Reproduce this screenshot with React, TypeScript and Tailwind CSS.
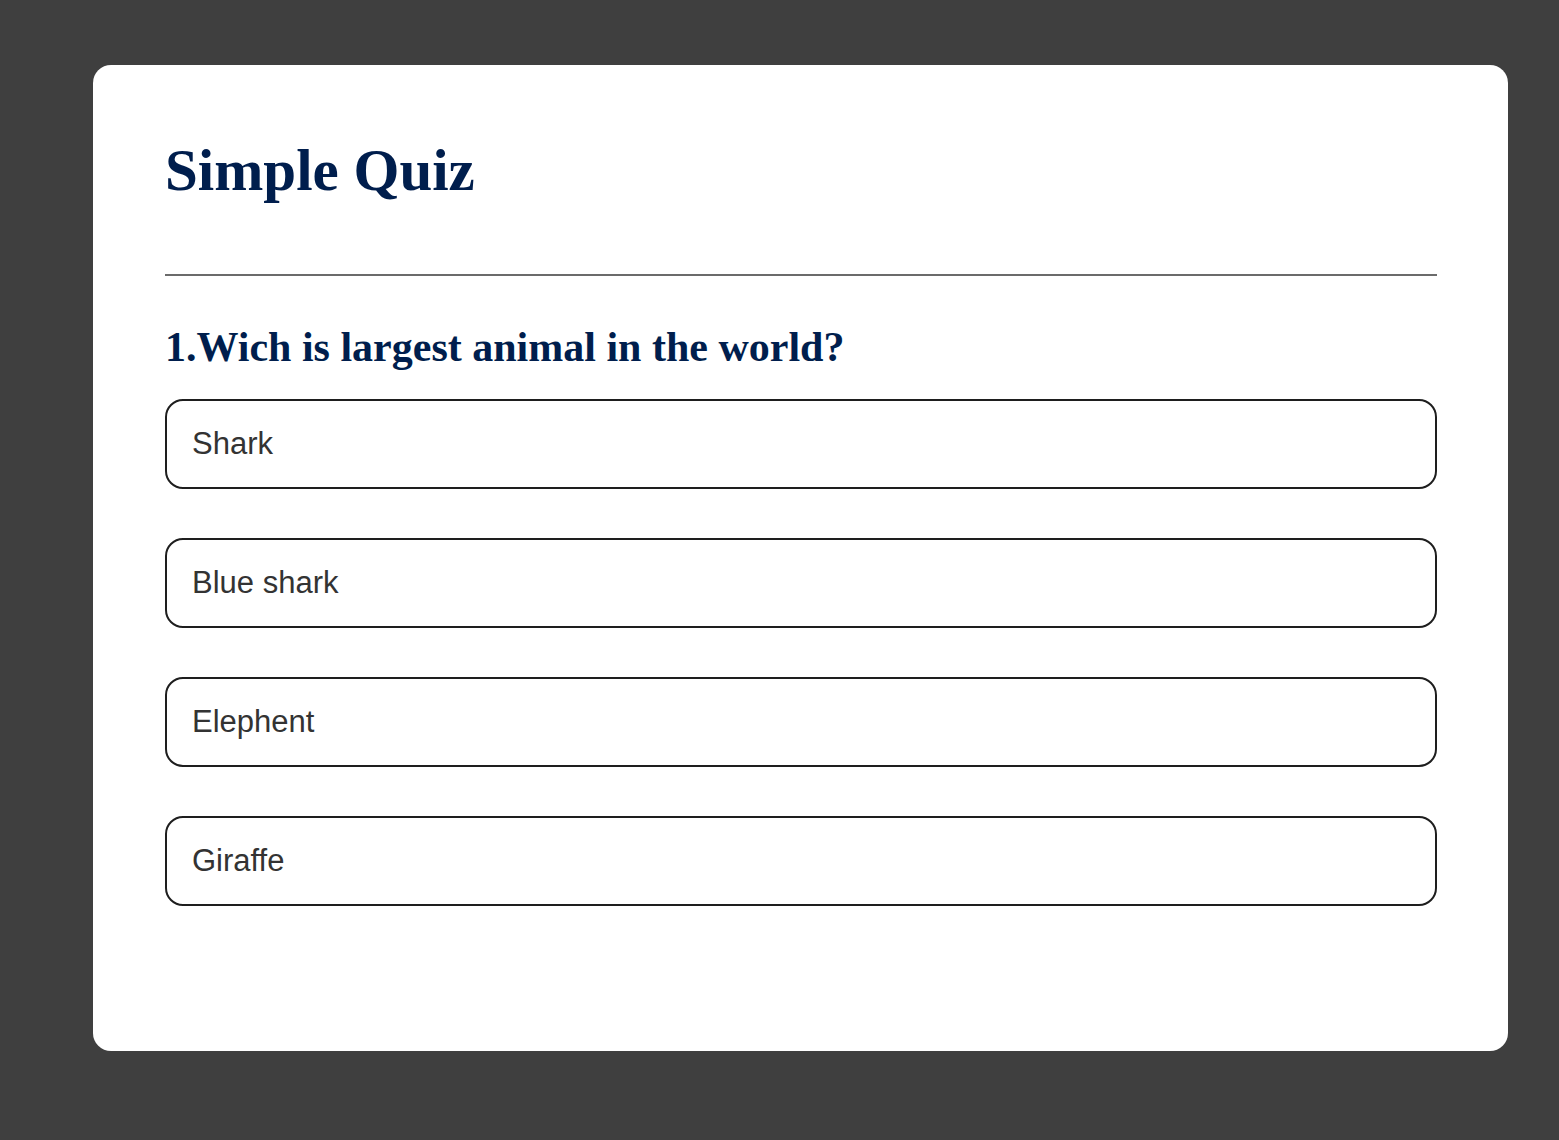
const options = ['Shark', 'Blue shark', 'Elephent', 'Giraffe'];

export default function App() {
  return (
    <div className="min-h-screen bg-[#3f3f3f] pt-[65px] pl-[93px] pr-[51px] pb-[90px]">
      <div className="bg-white rounded-[18px] pt-[72px] pl-[72px] pr-[71px] pb-[145px]">
        <h1 className="font-['Liberation_Serif',serif] font-bold text-[59px] leading-[66px] text-[#001e4d]">
          Simple Quiz
        </h1>
        <div className="mt-[71px] h-[2px] bg-[#6b6b6b]" />
        <h2 className="mt-[48px] font-['Liberation_Serif',serif] font-bold text-[42px] leading-[47px] text-[#001e4d]">
          1.Wich is largest animal in the world?
        </h2>
        <div className="mt-[28px] flex flex-col gap-[49px]">
          {options.map((opt) => (
            <button
              key={opt}
              className="flex items-center h-[90px] w-full rounded-[18px] border-2 border-[#1e1e1e] bg-white pl-[25px] text-left font-['Liberation_Sans',Arial,sans-serif] text-[31px] text-[#333]"
            >
              {opt}
            </button>
          ))}
        </div>
      </div>
    </div>
  );
}
